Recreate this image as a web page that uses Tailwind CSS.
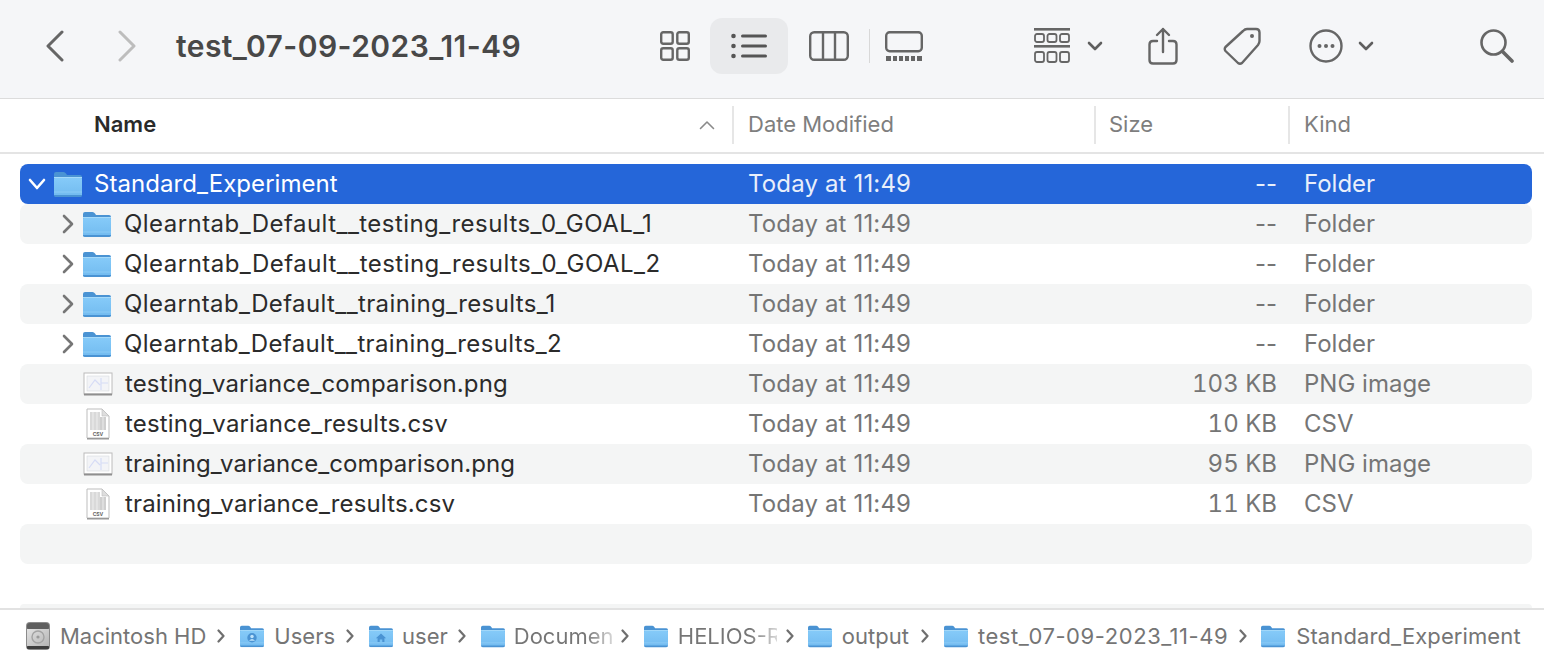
<!DOCTYPE html>
<html lang="en">
<head>
    <meta charset="UTF-8">
    <title>test_07-09-2023_11-49</title>
    <script src="https://cdn.jsdelivr.net/npm/@tailwindcss/browser@4"></script>
</head>
<body class="bg-white w-[1544px] h-[662px] overflow-hidden flex flex-col font-['Inter','Liberation_Sans',sans-serif]">

    <!-- Shared icons -->
    <svg class="absolute w-0 h-0" width="0" height="0">
        <defs>
            <linearGradient id="folderBody" x1="0" y1="0" x2="0" y2="1">
                <stop offset="0" stop-color="#86cbf9"/>
                <stop offset="1" stop-color="#72bbf0"/>
            </linearGradient>
            <linearGradient id="diskBody" x1="0" y1="0" x2="1" y2="1">
                <stop offset="0" stop-color="#e2e2e2"/>
                <stop offset="1" stop-color="#b4b4b4"/>
            </linearGradient>
            <symbol id="folder" viewBox="0 0 28 26">
                <path d="M0 3 Q0 1 2 1 H9.5 Q11 1 12 2.5 L13 4 H26 Q28 4 28 6 V10 H0 Z" fill="#4a93d3"/>
                <rect x="0" y="6" width="28" height="19.5" rx="2" fill="url(#folderBody)"/>
                <rect x="0" y="6" width="28" height="1" fill="#a6daf9"/>
                <rect x="0" y="20.5" width="28" height="1" fill="#8ccbf6"/>
                <path d="M0 24 V24.5 Q0 26 2 26 H26 Q28 26 28 24.5 V24 Z" fill="#4a93d3"/>
            </symbol>
            <symbol id="pngfile" viewBox="0 0 30 24">
                <rect x="1" y="1" width="28" height="21" fill="#fff" stroke="#bcbcbc"/>
                <rect x="1" y="21.5" width="28" height="2" fill="#8f8f8f"/>
                <rect x="4" y="4" width="22" height="15" fill="#f3f4f7" stroke="#d8dade" stroke-width=".6"/>
                <path d="M6 16 L12 8 L17 13 M18 6 V18 M18 11 H25" fill="none" stroke="#d6dcf6" stroke-width="1.2"/>
            </symbol>
            <symbol id="csvfile" viewBox="0 0 26 32">
                <path d="M2 1 H17 L24 8 V30 H2 Z" fill="#fff" stroke="#bdbdbd"/>
                <path d="M17 1 V8 H24 Z" fill="#dedede" stroke="#bdbdbd" stroke-width=".6"/>
                <rect x="5" y="4" width="10" height="18" fill="#d9d9d9"/>
                <rect x="15" y="9" width="6" height="13" fill="#cfcfcf"/>
                <path d="M8 4 V22 M12 4 V22 M18 9 V22" stroke="#f4f4f4" stroke-width=".8"/>
                <text x="13" y="28" text-anchor="middle" font-size="5" font-weight="700" font-family="Inter" fill="#666">CSV</text>
                <rect x="2" y="30" width="22" height="1.5" fill="#999"/>
            </symbol>
            <symbol id="rowchevron" viewBox="0 0 12 20">
                <path d="M2 2 L10 10 L2 18" fill="none" stroke="#767676" stroke-width="2.6" stroke-linecap="round" stroke-linejoin="round"/>
            </symbol>
            <symbol id="crumb" viewBox="0 0 8 14">
                <path d="M1.5 1.5 L6.5 7 L1.5 12.5" fill="none" stroke="#6f6f6f" stroke-width="2.2" stroke-linecap="round" stroke-linejoin="round"/>
            </symbol>
            <symbol id="minichevron" viewBox="0 0 16 10">
                <path d="M2 2 L8 8 L14 2" fill="none" stroke="#5f5f5f" stroke-width="2.6" stroke-linecap="round" stroke-linejoin="round"/>
            </symbol>
        </defs>
    </svg>

    <!-- Toolbar -->
    <div class="h-[99px] shrink-0 pb-[6px] bg-[#f5f6f8] border-b border-[#dcdcdc] flex items-center">
        <svg class="ml-[45px] w-[20px] h-[32px]" viewBox="0 0 20 32"><path d="M17 2 L3 16 L17 30" fill="none" stroke="#666" stroke-width="3" stroke-linecap="round" stroke-linejoin="round"/></svg>
        <svg class="ml-[52px] w-[20px] h-[32px]" viewBox="0 0 20 32"><path d="M3 2 L17 16 L3 30" fill="none" stroke="#bdbdbd" stroke-width="3" stroke-linecap="round" stroke-linejoin="round"/></svg>
        <h1 class="ml-[39px] w-[484px] text-[30px] font-semibold text-[#484848] tracking-[0.43px]">test_07-09-2023_11-49</h1>

        <svg class="w-[30px] h-[30px]" viewBox="0 0 30 30" fill="none" stroke="#666" stroke-width="2.4">
            <rect x="1.2" y="1.2" width="11.5" height="11.5" rx="2"/><rect x="17.3" y="1.2" width="11.5" height="11.5" rx="2"/>
            <rect x="1.2" y="17.3" width="11.5" height="11.5" rx="2"/><rect x="17.3" y="17.3" width="11.5" height="11.5" rx="2"/>
        </svg>
        <div class="ml-[20px] w-[78px] h-[56px] rounded-[12px] bg-[#e9eaec] flex items-center justify-center">
            <svg class="w-[36px] h-[26px]" viewBox="0 0 36 26" fill="#555">
                <circle cx="2.5" cy="3" r="2.3"/><circle cx="2.5" cy="13" r="2.3"/><circle cx="2.5" cy="23" r="2.3"/>
                <rect x="10" y="1.5" width="26" height="3" rx="1.5"/><rect x="10" y="11.5" width="26" height="3" rx="1.5"/><rect x="10" y="21.5" width="26" height="3" rx="1.5"/>
            </svg>
        </div>
        <svg class="ml-[21px] w-[40px] h-[30px]" viewBox="0 0 40 30" fill="none" stroke="#666" stroke-width="2.4">
            <rect x="1.2" y="1.2" width="37.6" height="27.6" rx="4"/><path d="M14 1 V29 M26 1 V29"/>
        </svg>
        <div class="ml-[20px] w-px h-[34px] bg-[#d8d8d8]"></div>
        <svg class="ml-[15px] w-[38px] h-[30px]" viewBox="0 0 38 30">
            <rect x="1.2" y="1.2" width="35.6" height="19" rx="3.5" fill="none" stroke="#666" stroke-width="2.4"/>
            <g fill="#666"><rect x="1" y="25" width="5" height="5"/><rect x="8" y="25" width="4" height="5"/><rect x="14" y="25" width="4" height="5"/><rect x="20" y="25" width="4" height="5"/><rect x="26" y="25" width="4" height="5"/><rect x="32" y="25" width="5" height="5"/></g>
        </svg>

        <svg class="ml-[111px] w-[36px] h-[36px]" viewBox="0 0 36 36">
            <g fill="#666"><rect x="0" y="0" width="36" height="2.6"/><rect x="0" y="17" width="36" height="2.6"/></g>
            <g fill="none" stroke="#666" stroke-width="1.8">
                <rect x="1" y="6" width="9" height="8" rx="2"/><rect x="13.5" y="6" width="9" height="8" rx="2"/><rect x="26" y="6" width="9" height="8" rx="2"/>
                <rect x="1" y="24" width="9" height="10" rx="2"/><rect x="13.5" y="24" width="9" height="10" rx="2"/><rect x="26" y="24" width="9" height="10" rx="2"/>
            </g>
        </svg>
        <svg class="ml-[17px] w-[16px] h-[10px]"><use href="#minichevron"/></svg>
        <svg class="ml-[45px] w-[30px] h-[38px]" viewBox="0 0 30 38" fill="none" stroke="#666" stroke-width="2.4" stroke-linecap="round" stroke-linejoin="round">
            <path d="M9 14 H5 Q1.5 14 1.5 17.5 V33 Q1.5 36.5 5 36.5 H25 Q28.5 36.5 28.5 33 V17.5 Q28.5 14 25 14 H21"/>
            <path d="M15 25 V2 M9 8 L15 2 L21 8"/>
        </svg>
        <svg class="ml-[45px] w-[38px] h-[38px]" viewBox="0 0 38 38" fill="none" stroke="#666" stroke-width="2.4" stroke-linejoin="round">
            <path d="M24 2 H33 Q36.5 2 36.5 5.5 V14 Q36.5 16 35 18 L19 36 Q17 37.5 15 36 L2.5 24 Q1 22 2.5 20 L20 4 Q22 2 24 2 Z"/>
            <circle cx="29" cy="9" r="2" fill="#666" stroke="none"/>
        </svg>
        <svg class="ml-[48px] w-[34px] h-[34px]" viewBox="0 0 34 34">
            <circle cx="17" cy="17" r="15.5" fill="none" stroke="#666" stroke-width="2.4"/>
            <g fill="#666"><circle cx="10.5" cy="17" r="2"/><circle cx="17" cy="17" r="2"/><circle cx="23.5" cy="17" r="2"/></g>
        </svg>
        <svg class="ml-[15px] w-[16px] h-[10px]"><use href="#minichevron"/></svg>
        <svg class="ml-[106px] w-[34px] h-[34px]" viewBox="0 0 34 34" fill="none" stroke="#666" stroke-linecap="round">
            <circle cx="13.5" cy="13.5" r="12" stroke-width="2.6"/><path d="M22.5 22.5 L32 32" stroke-width="3.6"/>
        </svg>
    </div>

    <!-- Column headers -->
    <div class="h-[55px] shrink-0 pb-[2px] border-b-2 border-[#e4e4e4] grid grid-cols-[732px_362px_194px_1fr] items-center text-[22px] text-[#7e7e7e]">
        <div class="pl-[94px] pr-[17px] flex items-center justify-between font-semibold text-[#2a2a2a]">
            <span>Name</span>
            <svg class="w-[16px] h-[10px]" viewBox="0 0 16 10"><path d="M1.5 8.5 L8 2 L14.5 8.5" fill="none" stroke="#8a8a8a" stroke-width="1.6" stroke-linecap="round" stroke-linejoin="round"/></svg>
        </div>
        <div class="h-[38px] pl-[14px] border-l-2 border-[#e6e6e6] flex items-center">Date Modified</div>
        <div class="h-[38px] pl-[13px] border-l-2 border-[#e6e6e6] flex items-center">Size</div>
        <div class="h-[38px] pl-[14px] border-l-2 border-[#e6e6e6] flex items-center">Kind</div>
    </div>

    <!-- File list -->
    <div class="flex-1 pt-[10px] pl-[20px] pr-[12px] text-[24px] text-[#2b2b2b]">
        <div class="h-[40px] rounded-[8px] bg-[#2566d9] text-white grid grid-cols-[712px_362px_183px_1fr] items-center">
            <div class="flex items-center">
                <svg class="ml-[8px] w-[18px] h-[12px]" viewBox="0 0 18 12"><path d="M2 2 L9 10 L16 2" fill="none" stroke="#fff" stroke-width="2.6" stroke-linecap="round" stroke-linejoin="round"/></svg>
                <svg class="ml-[8px] w-[28px] h-[26px]"><use href="#folder"/></svg>
                <span class="ml-[12px] tracking-[0.05px]">Standard_Experiment</span>
            </div>
            <div class="pl-[16px] text-[#e9effb] tracking-[0.15px]">Today at 11:49</div>
            <div class="text-right text-[#e9effb]">--</div>
            <div class="pl-[27px] text-[#e9effb]">Folder</div>
        </div>

        <div class="h-[40px] rounded-[8px] bg-[#f4f5f5] grid grid-cols-[712px_362px_183px_1fr] items-center">
            <div class="flex items-center">
                <svg class="ml-[42px] w-[12px] h-[20px]"><use href="#rowchevron"/></svg>
                <svg class="ml-[9px] w-[28px] h-[26px]"><use href="#folder"/></svg>
                <span class="ml-[13px] tracking-[0.45px]">Qlearntab_Default__testing_results_0_GOAL_1</span>
            </div>
            <div class="pl-[16px] text-[#757575] tracking-[0.15px]">Today at 11:49</div>
            <div class="text-right text-[#757575]">--</div>
            <div class="pl-[27px] text-[#757575]">Folder</div>
        </div>
        <div class="h-[40px] rounded-[8px] grid grid-cols-[712px_362px_183px_1fr] items-center">
            <div class="flex items-center">
                <svg class="ml-[42px] w-[12px] h-[20px]"><use href="#rowchevron"/></svg>
                <svg class="ml-[9px] w-[28px] h-[26px]"><use href="#folder"/></svg>
                <span class="ml-[13px] tracking-[0.47px]">Qlearntab_Default__testing_results_0_GOAL_2</span>
            </div>
            <div class="pl-[16px] text-[#757575] tracking-[0.15px]">Today at 11:49</div>
            <div class="text-right text-[#757575]">--</div>
            <div class="pl-[27px] text-[#757575]">Folder</div>
        </div>
        <div class="h-[40px] rounded-[8px] bg-[#f4f5f5] grid grid-cols-[712px_362px_183px_1fr] items-center">
            <div class="flex items-center">
                <svg class="ml-[42px] w-[12px] h-[20px]"><use href="#rowchevron"/></svg>
                <svg class="ml-[9px] w-[28px] h-[26px]"><use href="#folder"/></svg>
                <span class="ml-[13px] tracking-[0.38px]">Qlearntab_Default__training_results_1</span>
            </div>
            <div class="pl-[16px] text-[#757575] tracking-[0.15px]">Today at 11:49</div>
            <div class="text-right text-[#757575]">--</div>
            <div class="pl-[27px] text-[#757575]">Folder</div>
        </div>
        <div class="h-[40px] rounded-[8px] grid grid-cols-[712px_362px_183px_1fr] items-center">
            <div class="flex items-center">
                <svg class="ml-[42px] w-[12px] h-[20px]"><use href="#rowchevron"/></svg>
                <svg class="ml-[9px] w-[28px] h-[26px]"><use href="#folder"/></svg>
                <span class="ml-[13px] tracking-[0.35px]">Qlearntab_Default__training_results_2</span>
            </div>
            <div class="pl-[16px] text-[#757575] tracking-[0.15px]">Today at 11:49</div>
            <div class="text-right text-[#757575]">--</div>
            <div class="pl-[27px] text-[#757575]">Folder</div>
        </div>
        <div class="h-[40px] rounded-[8px] bg-[#f4f5f5] grid grid-cols-[712px_362px_183px_1fr] items-center">
            <div class="flex items-center">
                <svg class="ml-[63px] w-[30px] h-[24px]"><use href="#pngfile"/></svg>
                <span class="ml-[12px] tracking-[0.13px]">testing_variance_comparison.png</span>
            </div>
            <div class="pl-[16px] text-[#757575] tracking-[0.15px]">Today at 11:49</div>
            <div class="text-right text-[#757575] tabular-nums">103 KB</div>
            <div class="pl-[27px] text-[#757575]">PNG image</div>
        </div>
        <div class="h-[40px] rounded-[8px] grid grid-cols-[712px_362px_183px_1fr] items-center">
            <div class="flex items-center">
                <svg class="ml-[65px] w-[26px] h-[32px]"><use href="#csvfile"/></svg>
                <span class="ml-[14px] tracking-[0.18px]">testing_variance_results.csv</span>
            </div>
            <div class="pl-[16px] text-[#757575] tracking-[0.15px]">Today at 11:49</div>
            <div class="text-right text-[#757575] tabular-nums">10 KB</div>
            <div class="pl-[27px] text-[#757575]">CSV</div>
        </div>
        <div class="h-[40px] rounded-[8px] bg-[#f4f5f5] grid grid-cols-[712px_362px_183px_1fr] items-center">
            <div class="flex items-center">
                <svg class="ml-[63px] w-[30px] h-[24px]"><use href="#pngfile"/></svg>
                <span class="ml-[12px] tracking-[0.1px]">training_variance_comparison.png</span>
            </div>
            <div class="pl-[16px] text-[#757575] tracking-[0.15px]">Today at 11:49</div>
            <div class="text-right text-[#757575] tabular-nums">95 KB</div>
            <div class="pl-[27px] text-[#757575]">PNG image</div>
        </div>
        <div class="h-[40px] rounded-[8px] grid grid-cols-[712px_362px_183px_1fr] items-center">
            <div class="flex items-center">
                <svg class="ml-[65px] w-[26px] h-[32px]"><use href="#csvfile"/></svg>
                <span class="ml-[14px] tracking-[0.14px]">training_variance_results.csv</span>
            </div>
            <div class="pl-[16px] text-[#757575] tracking-[0.15px]">Today at 11:49</div>
            <div class="text-right text-[#757575] tabular-nums">11 KB</div>
            <div class="pl-[27px] text-[#757575]">CSV</div>
        </div>
        <div class="h-[40px] rounded-[8px] bg-[#f4f5f5]"></div>
        <div class="mt-[40px] h-[4px] rounded-t-[8px] bg-[#f4f5f5]"></div>
    </div>

    <!-- Path bar -->
    <div class="h-[54px] shrink-0 border-t-2 border-[#e2e2e2] flex items-center text-[22px] text-[#757575] whitespace-nowrap">
        <svg class="ml-[26px] w-[24px] h-[28px]" viewBox="0 0 24 28">
            <rect x="0" y="0" width="24" height="28" rx="4" fill="#8b8b8b"/>
            <rect x="1" y="1" width="22" height="7" rx="3" fill="#5f5f5f"/>
            <rect x="1" y="7" width="22" height="17" fill="url(#diskBody)"/>
            <circle cx="12" cy="15" r="6" fill="none" stroke="#a3a3a3" stroke-width="1.4"/>
            <circle cx="12" cy="15" r="1.6" fill="#9a9a9a"/>
            <rect x="1" y="24" width="22" height="3" rx="1" fill="#3d3d3d"/>
        </svg>
        <span class="ml-[10px]">Macintosh HD</span>
        <svg class="ml-[11px] w-[8px] h-[14px]"><use href="#crumb"/></svg>
        <svg class="ml-[15px] w-[24px] h-[24px]" viewBox="0 0 28 26">
            <use href="#folder"/>
            <circle cx="14" cy="15" r="5.5" fill="#4a93d3"/><circle cx="14" cy="13.5" r="2" fill="#bfe3fb"/><path d="M10.5 18.5 Q14 14.5 17.5 18.5" fill="#bfe3fb"/>
        </svg>
        <span class="ml-[10px]">Users</span>
        <svg class="ml-[11px] w-[8px] h-[14px]"><use href="#crumb"/></svg>
        <svg class="ml-[15px] w-[24px] h-[24px]" viewBox="0 0 28 26">
            <use href="#folder"/>
            <path d="M8 15.5 L14 10 L20 15.5 H18 V20 H15.5 V17 H12.5 V20 H10 V15.5 Z" fill="#4a93d3"/>
        </svg>
        <span class="ml-[9px]">user</span>
        <svg class="ml-[10px] w-[8px] h-[14px]"><use href="#crumb"/></svg>
        <svg class="ml-[15px] w-[24px] h-[24px]"><use href="#folder"/></svg>
        <span class="ml-[9px] w-[99px] bg-linear-to-r from-[#757575] from-[72%] to-[#d8d8d8] bg-clip-text text-transparent">Documen</span>
        <svg class="ml-[8px] w-[8px] h-[14px]"><use href="#crumb"/></svg>
        <svg class="ml-[15px] w-[24px] h-[24px]"><use href="#folder"/></svg>
        <span class="ml-[10px] w-[99px] bg-linear-to-r from-[#757575] from-[72%] to-[#d8d8d8] bg-clip-text text-transparent">HELIOS-R</span>
        <svg class="ml-[9px] w-[8px] h-[14px]"><use href="#crumb"/></svg>
        <svg class="ml-[14px] w-[24px] h-[24px]"><use href="#folder"/></svg>
        <span class="ml-[10px]">output</span>
        <svg class="ml-[12px] w-[8px] h-[14px]"><use href="#crumb"/></svg>
        <svg class="ml-[15px] w-[24px] h-[24px]"><use href="#folder"/></svg>
        <span class="ml-[10px] tracking-[0.57px]">test_07-09-2023_11-49</span>
        <svg class="ml-[11px] w-[8px] h-[14px]"><use href="#crumb"/></svg>
        <svg class="ml-[14px] w-[24px] h-[24px]"><use href="#folder"/></svg>
        <span class="ml-[11px] tracking-[0.1px]">Standard_Experiment</span>
    </div>
</body>
</html>
